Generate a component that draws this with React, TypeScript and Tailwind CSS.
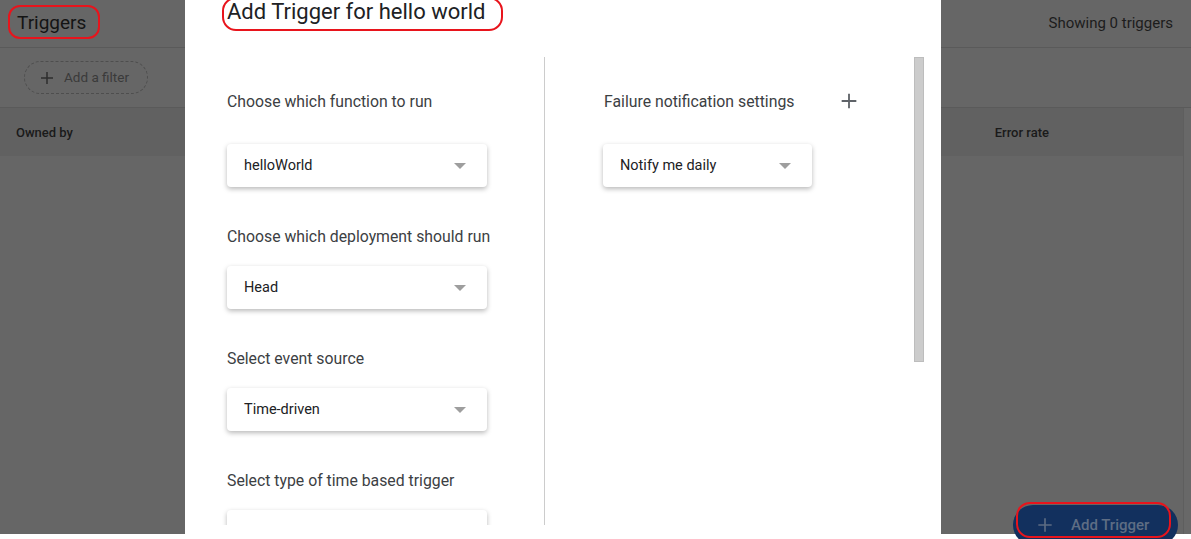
import React from "react";

function Select({ value, width }: { value: string; width: string }) {
  return (
    <div
      className={`${width} h-[43px] bg-white rounded-[4px] shadow-[0_2px_5px_rgba(0,0,0,0.28)] flex items-center justify-between pl-[17px] pr-[21px]`}
    >
      <span className="text-[14.5px] text-[#202124]">{value}</span>
      <span className="w-0 h-0 border-l-[6px] border-r-[6px] border-t-[6px] border-l-transparent border-r-transparent border-t-[#9e9e9e]"></span>
    </div>
  );
}

function Field({ label, value, first }: { label: string; value: string; first?: boolean }) {
  return (
    <div className="flex flex-col mb-[40px]">
      <div className="h-[20px] leading-[20px] text-[15.8px] text-[#3c4043]">{label}</div>
      <div className={first ? "mt-[32px]" : "mt-[19px]"}>
        <Select value={value} width="w-[260px]" />
      </div>
    </div>
  );
}

function Plus({ size, color }: { size: number; color: string }) {
  return (
    <svg width={size} height={size} viewBox="0 0 24 24">
      <path d="M12 4v16M4 12h16" stroke={color} strokeWidth="2" fill="none" />
    </svg>
  );
}

export default function App() {
  return (
    <div className="w-[1191px] h-[539px] bg-white relative overflow-hidden" style={{ fontFamily: "Roboto, 'Liberation Sans', sans-serif" }}>
      {/* dimmed page behind the dialog */}
      <div className="w-full h-[534px] bg-[#666666] flex flex-col">
        <div className="h-[48px] border-b border-[#5a5a5a] flex items-center justify-between pl-[17px] pr-[18px]">
          <div className="text-[19px] text-[#141414]">Triggers</div>
          <div className="text-[15px] text-[#1c1c1c]">Showing 0 triggers</div>
        </div>
        <div className="h-[60px] border-b border-[#5a5a5a] flex items-center pl-[24px]">
          <div className="h-[33px] w-[124px] rounded-full border border-dashed border-[#4e4e4e] flex items-center pl-[13px] gap-[8px]">
            <Plus size={18} color="#2e2e2e" />
            <span className="text-[13.5px] text-[#3a3a3a]">Add a filter</span>
          </div>
        </div>
        <div className="flex flex-1">
          <div className="flex-1">
            <div className="h-[48px] bg-[#616161] flex items-center justify-between pl-[16px] pr-[134px] pt-[2px]">
              <span className="text-[13px] font-medium text-[#1a1a1a]">Owned by</span>
              <span className="text-[13px] font-medium text-[#1a1a1a]">Error rate</span>
            </div>
          </div>
          <div className="w-[8px] border-l border-[#5e5e5e] bg-[#686868]"></div>
        </div>
      </div>

      {/* Add Trigger button */}
      <div className="absolute left-[1013px] top-[505px] w-[165px] h-[40px] rounded-full bg-[#12305e] flex items-center pl-[22px] gap-[16px]">
        <Plus size={20} color="#5c6b82" />
        <span className="text-[15px] font-medium text-[#5e6d84]">Add Trigger</span>
      </div>

      {/* dialog */}
      <div className="absolute left-[185px] top-0 w-[756px] h-[534px] bg-white flex flex-col">
        <div className="pl-[42px] h-[24px] leading-[24px] text-[22px] text-[#202124]">Add Trigger for hello world</div>
        <div className="flex mt-[33px] h-[468px]">
          <div className="w-[360px] pl-[42px] pt-[35px] border-r border-[#cccccc] overflow-hidden">
            <Field label="Choose which function to run" value="helloWorld" first />
            <Field label="Choose which deployment should run" value="Head" />
            <Field label="Select event source" value="Time-driven" />
            <Field label="Select type of time based trigger" value="" />
          </div>
          <div className="flex-1 flex">
            <div className="w-[369px] pl-[58px] pt-[35px]">
              <div className="flex items-center h-[20px] pl-[1px]">
                <span className="text-[15.8px] text-[#3c4043] leading-[20px]">Failure notification settings</span>
                <span className="ml-[44px] -mt-[2px]">
                  <Plus size={22} color="#5f6368" />
                </span>
              </div>
              <div className="mt-[32px]">
                <Select value="Notify me daily" width="w-[209px]" />
              </div>
            </div>
            <div className="w-[10px] h-[305px] bg-[#cccccc] border border-[#bdbdbd]"></div>
          </div>
        </div>
      </div>

      {/* red annotation marks */}
      <div className="absolute left-[8px] top-[5px] w-[92px] h-[34px] border-2 border-[#e8141c] rounded-[12px]"></div>
      <div className="absolute left-[222px] top-[-3px] w-[281px] h-[34px] border-2 border-[#e8141c] rounded-[14px]"></div>
      <div className="absolute left-[1016px] top-[502px] w-[155px] h-[36px] border-2 border-[#e8141c] rounded-[14px]"></div>
    </div>
  );
}
